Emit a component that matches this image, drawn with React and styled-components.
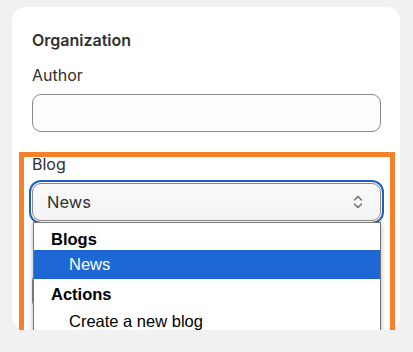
import styled, { createGlobalStyle } from "styled-components"

const Global = createGlobalStyle`
  body {
    margin: 0;
    background: #f1f1f1;
    font-family: Inter, "Noto Sans", sans-serif;
    color: #303030;
  }
`

const Page = styled.div`
  padding: 7px 13px 0 12px;
`

const Card = styled.div`
  background: #fff;
  border-radius: 14px;
  padding: 23px 19px 20px 20px;
  display: flex;
  flex-direction: column;
  gap: 15px;
`

const Title = styled.h2`
  margin: 0;
  font-size: 16px;
  line-height: 20px;
  font-weight: 600;
  color: #303030;
`

const Fields = styled.div`
  display: flex;
  flex-direction: column;
  gap: 20px;
`

// orange annotation frame round the blog picker, runs past the card bottom
const Annotated = styled.div`
  display: flex;
  flex-direction: column;
  gap: 22px;
  border: 5px solid #f5822a;
  margin: 0 -14px -40px -13px;
  padding: 0 9px 35px 8px;
`

const Field = styled.div`
  display: flex;
  flex-direction: column;
  gap: 9px;
`

const Label = styled.label`
  font-size: 16px;
  line-height: 20px;
  color: #303030;
  margin-top: ${(p) => (p.$tight ? "-3px" : "0")};
  &:empty {
    height: 20px;
  }
`

const Input = styled.div`
  height: 38px;
  box-sizing: border-box;
  border: 1px solid #8a8a8a;
  border-radius: 9px;
  background: #fdfdfd;
`

const SelectWrap = styled.div`
  position: relative;
`

const Select = styled.div`
  height: 38px;
  box-sizing: border-box;
  border: 1px solid #8a8a8a;
  border-radius: 9px;
  background: linear-gradient(#fafafa, #f3f3f3);
  outline: 2px solid #1d5fc4;
  outline-offset: 1px;
  display: flex;
  align-items: center;
  justify-content: space-between;
  padding: 0 16px 0 14px;
  font-size: 16.5px;
  color: #303030;
`

const Chevron = styled.svg`
  width: 12px;
  height: 18px;
  color: #6b6b6b;
`

const Menu = styled.div`
  position: absolute;
  top: calc(100% + 1px);
  left: 1px;
  right: 0;
  z-index: 2;
  background: #fff;
  border: 1px solid #777;
  box-shadow: 0 2px 5px rgba(0, 0, 0, 0.3);
  font-family: "Liberation Sans", Arial, sans-serif;
  font-size: 16.5px;
  color: #000;
`

const Row = styled.div`
  box-sizing: border-box;
  height: ${(p) => p.$h || 28}px;
  display: flex;
  align-items: center;
  padding-top: ${(p) => p.$pt || 0}px;
  padding-left: ${(p) => (p.$group ? "17px" : "35px")};
  font-weight: ${(p) => (p.$group ? 700 : 400)};
  background: ${(p) => (p.$active ? "#1d68d4" : "transparent")};
  color: ${(p) => (p.$active ? "#fff" : "#000")};
`

export default function App() {
  return (
    <>
      <Global />
      <Page>
        <Card>
          <Title>Organization</Title>
          <Fields>
            <Field>
              <Label>Author</Label>
              <Input />
            </Field>
            <Annotated>
              <Field>
                <Label $tight>Blog</Label>
                <SelectWrap>
                  <Select>
                    <span>News</span>
                    <Chevron viewBox="0 0 12 18" fill="none">
                      <path d="M2.5 7 6 3.5 9.5 7M2.5 11 6 14.5 9.5 11" stroke="currentColor" strokeWidth="1.4" strokeLinecap="round" strokeLinejoin="round" />
                    </Chevron>
                  </Select>
                  <Menu>
                    <Row $group $h={27} $pt={5}>Blogs</Row>
                    <Row $active $h={29}>News</Row>
                    <Row $group $pt={3}>Actions</Row>
                    <Row>Create a new blog</Row>
                  </Menu>
                </SelectWrap>
              </Field>
              {/* field hidden under the open menu */}
              <Field>
                <Label />
                <Input />
              </Field>
            </Annotated>
          </Fields>
        </Card>
      </Page>
    </>
  )
}
